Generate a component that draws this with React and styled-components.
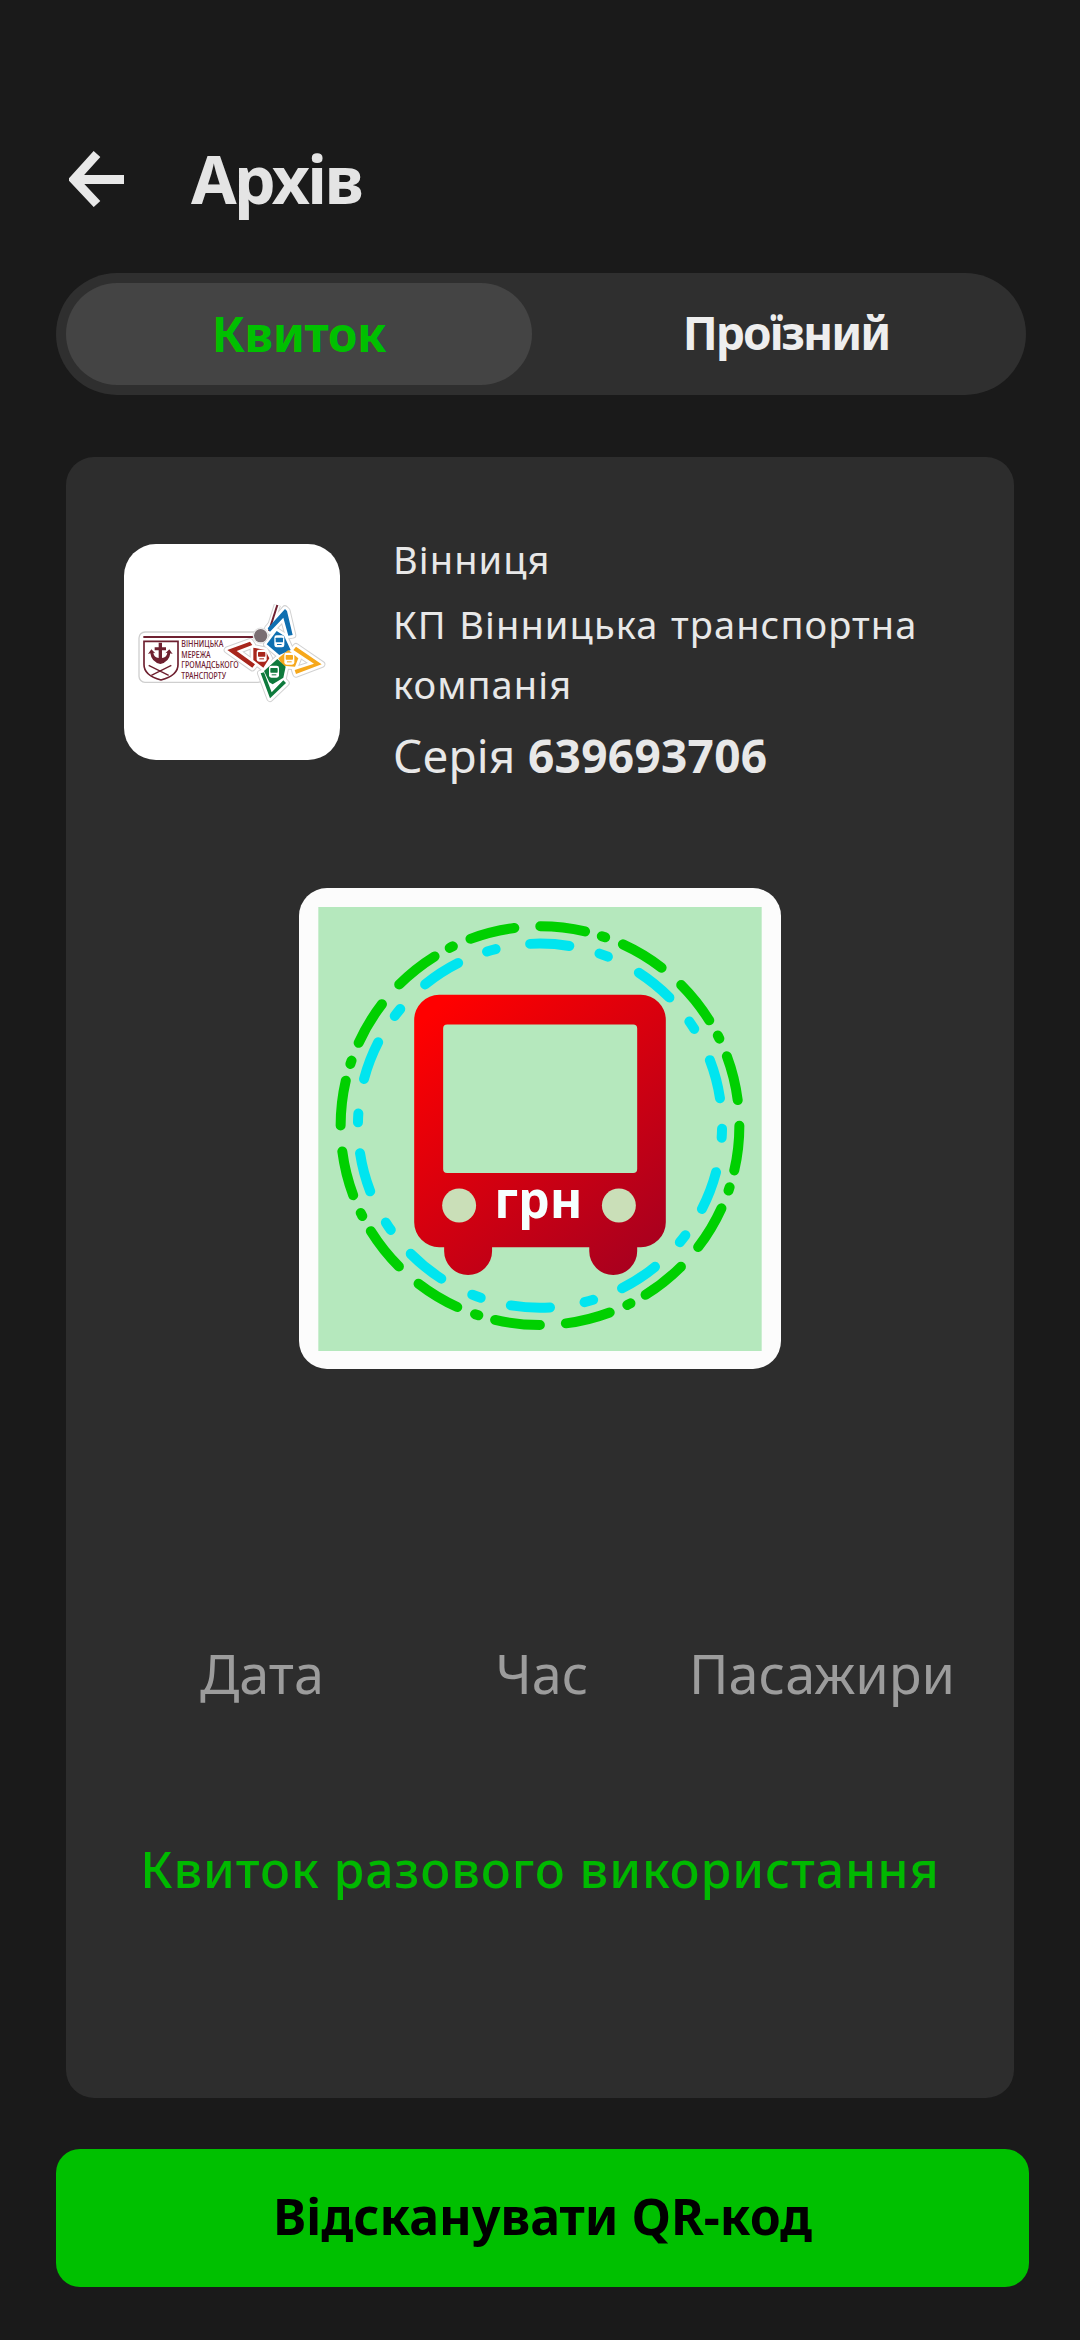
import styled, { createGlobalStyle } from 'styled-components';

const GlobalStyle = createGlobalStyle`
  html, body {
    margin: 0;
    padding: 0;
    background: #1a1a1a;
  }

  * {
    box-sizing: border-box;
  }
`;

const Page = styled.div`
  width: 1080px;
  height: 2340px;
  padding-top: 151px;
  background: #1a1a1a;
  font-family: 'Noto Sans', 'Open Sans', sans-serif;
  overflow: hidden;
`;

const Header = styled.header`
  display: flex;
  align-items: center;
  height: 56px;
  padding-left: 69px;
`;

const BackIcon = styled.svg`
  width: 56px;
  height: 56px;
  margin-right: 66px;
`;

const Title = styled.h1`
  margin: -3px 0 0;
  font-size: 66px;
  line-height: 56px;
  font-weight: 700;
  letter-spacing: -2.8px;
  color: #e4e4e4;
`;

const Tabs = styled.div`
  display: grid;
  grid-template-columns: 466px 1fr;
  width: 970px;
  height: 122px;
  margin: 66px 0 0 56px;
  padding: 10px;
  border-radius: 61px;
  background: #2f2f2f;
`;

const Tab = styled.div`
  display: flex;
  align-items: center;
  justify-content: center;
  border-radius: 51px;
  font-weight: 700;
  font-size: ${(p) => (p.$active ? '48px' : '46px')};
  letter-spacing: ${(p) => (p.$active ? '-0.5px' : '-2px')};
  padding-left: ${(p) => (p.$active ? '0' : '24px')};
  padding-bottom: ${(p) => (p.$active ? '2px' : '4px')};
  color: ${(p) => (p.$active ? '#00c000' : '#eeeeee')};
  background: ${(p) => (p.$active ? '#444444' : 'transparent')};
`;

const Card = styled.section`
  display: flex;
  flex-direction: column;
  width: 948px;
  height: 1641px;
  margin: 62px 0 0 66px;
  padding: 87px 0 0 58px;
  border-radius: 28px;
  background: #2d2d2d;
`;

const CarrierRow = styled.div`
  display: flex;
  gap: 53px;
`;

const LogoTile = styled.div`
  flex: none;
  width: 216px;
  height: 216px;
  border-radius: 32px;
  background: #ffffff;
  overflow: hidden;

  svg {
    display: block;
    width: 100%;
    height: 100%;
  }
`;

const Carrier = styled.div`
  margin-top: -15px;
  width: 560px;
  font-size: 38px;
  line-height: 60px;
  letter-spacing: 1.1px;
  word-spacing: 1.5px;
  color: #e8e8e8;
`;

const CarrierName = styled.div`
  margin-top: 5px;
`;

const Serial = styled.div`
  margin-top: 8px;
  font-size: 46px;
  line-height: 66px;
  letter-spacing: 0.3px;
  word-spacing: 0;

  b {
    font-weight: 700;
  }
`;

const TicketFrame = styled.div`
  align-self: flex-start;
  width: 482px;
  height: 481px;
  margin: 100px 0 0 175px;
  padding: 19px 18px 18px;
  border-radius: 28px;
  background: #fcfcfc;

  svg {
    display: block;
    width: 100%;
    height: 100%;
  }
`;

const Labels = styled.div`
  display: grid;
  grid-template-columns: repeat(3, 280px);
  margin: 267px 0 0 -2px;
`;

const Label = styled.div`
  text-align: center;
  font-size: 54px;
  line-height: 74px;
  font-weight: 400;
  color: #9c9c9c;
`;

const Note = styled.div`
  margin: 126px 0 0 -58px;
  text-align: center;
  font-size: 50px;
  line-height: 66px;
  font-weight: 500;
  letter-spacing: 0.9px;
  color: #00b800;
`;

const ScanButton = styled.button`
  display: block;
  width: 973px;
  height: 138px;
  margin: 51px 0 0 56px;
  padding: 0 0 5px;
  border: none;
  border-radius: 24px;
  background: #00c000;
  color: #000000;
  font-family: inherit;
  font-size: 50px;
  font-weight: 700;
`;

const MAROON = '#6e2030';

// petals of the star, in crop pixels
const PETALS = [
  {
    color: '#0f6fb0',
    body: '140,148 170,108 192,122 212,165 178,180',
    chevron: '143,100 195,42 201,48 218,120 205,122 190,68 150,110',
    bus: [178, 139],
  },
  {
    color: '#a8261c',
    body: '100,158 135,165 148,190 130,218 100,195',
    chevron: '22,165 90,140 97,150 50,168 105,208 97,218',
    bus: [125, 182],
  },
  {
    color: '#f6a81c',
    body: '175,190 205,165 235,190 225,215 188,212',
    chevron: '228,155 305,208 228,237 224,225 282,206 220,165',
    bus: [208, 191],
  },
  {
    color: '#0e7a3c',
    body: '132,228 172,192 197,215 190,248 158,268 148,262',
    chevron: '122,235 132,232 155,292 190,256 198,264 150,310',
    bus: [162, 230],
  },
];

const VinnytsiaLogo = () => (
  <svg viewBox="42 42 648 648">
    <rect x="87" y="306" width="375" height="151" rx="18" fill="#fff" stroke="#cfcfcf" strokeWidth="4" />
    <rect x="100" y="318" width="330" height="6" fill={MAROON} />

    <path d="M102 334H204V404Q204 436 153 450Q102 436 102 404Z" fill="#fff" stroke={MAROON} strokeWidth="5" />
    <path
      fill={MAROON}
      d="M146 338H156V352H168V361H156V384Q170 382 172 368L166 370L178 358L188 372L181 370Q178 396 151 402Q124 396 121 370L114 372L124 358L136 370L130 368Q132 382 146 384V361H134V352H146Z"
    />
    <g fill="none" stroke={MAROON} strokeWidth="4">
      <path d="M116 406L176 436M184 406L124 436" />
    </g>

    <g fill={MAROON} fontFamily="'Noto Sans', sans-serif" fontSize="25" fontWeight="500">
      <text x="214" y="352" textLength="126" lengthAdjust="spacingAndGlyphs">ВІННИЦЬКА</text>
      <text x="214" y="384" textLength="88" lengthAdjust="spacingAndGlyphs">МЕРЕЖА</text>
      <text x="214" y="415" textLength="172" lengthAdjust="spacingAndGlyphs">ГРОМАДСЬКОГО</text>
      <text x="214" y="446" textLength="134" lengthAdjust="spacingAndGlyphs">ТРАНСПОРТУ</text>
    </g>

    <g transform="translate(330 195)" strokeLinejoin="round">
      <g fill="#fff" stroke="#d2d2d2" strokeWidth="22">
        {PETALS.map((p) => (
          <g key={p.color}>
            <polygon points={p.chevron} />
            <polygon points={p.body} />
          </g>
        ))}
        <path d="M145 115L172 30" fill="none" />
      </g>
      <g fill="#fff" stroke="#fff" strokeWidth="16">
        {PETALS.map((p) => (
          <g key={p.color}>
            <polygon points={p.chevron} />
            <polygon points={p.body} />
          </g>
        ))}
        <path d="M145 115L172 30" fill="none" />
      </g>
      <path d="M147 108L172 30" stroke={MAROON} strokeWidth="6" />
      {PETALS.map((p) => (
        <g key={p.color}>
          <polygon points={p.body} fill={p.color} />
          <polygon points={p.chevron} fill={p.color} />
          <rect x={p.bus[0] - 15} y={p.bus[1] - 18} width="30" height="36" rx="7" fill="#fff" />
          <rect x={p.bus[0] - 11} y={p.bus[1] - 11} width="22" height="14" rx="2" fill={p.color} />
          <rect x={p.bus[0] - 7} y={p.bus[1] + 8} width="14" height="3" fill={p.color} />
        </g>
      ))}
      <circle cx="122" cy="122" r="23" fill="#fff" stroke="#d2d2d2" strokeWidth="2" />
      <circle cx="122" cy="122" r="20" fill="#7a6e72" />
    </g>
  </svg>
);

const TicketPicture = () => (
  <svg viewBox="84 81 1332 1334">
    <defs>
      <linearGradient id="busFill" gradientUnits="userSpaceOnUse" x1="420" y1="400" x2="1080" y2="1180">
        <stop offset="0" stopColor="#ff0000" />
        <stop offset="1" stopColor="#a50020" />
      </linearGradient>
    </defs>
    <rect x="84" y="81" width="1332" height="1334" fill="#b5e8bd" />

    <circle
      cx="750"
      cy="738"
      r="599"
      fill="none"
      stroke="#00d000"
      strokeWidth="30"
      strokeLinecap="round"
      pathLength="360"
      strokeDasharray="13 5 1 5.5 13 7.5"
    />
    <circle
      cx="750"
      cy="738"
      r="547"
      fill="none"
      stroke="#00e5ef"
      strokeWidth="30"
      strokeLinecap="round"
      pathLength="360"
      strokeDasharray="12.4 9.8 2.8 11"
      strokeDashoffset="21.2"
    />

    <path
      fill="url(#busFill)"
      fillRule="evenodd"
      d="M447 345H1053A75 75 0 0 1 1128 420V1028A75 75 0 0 1 1053 1103H1042V1115A72 72 0 0 1 898 1115V1103H606V1115A72 72 0 0 1 462 1115V1103H447A75 75 0 0 1 372 1028V420A75 75 0 0 1 447 345Z
         M471 434A12 12 0 0 0 459 446V868A12 12 0 0 0 471 880H1030A12 12 0 0 0 1042 868V446A12 12 0 0 0 1030 434Z"
    />
    <circle cx="507" cy="978" r="51" fill="#cadfb8" />
    <circle cx="987" cy="978" r="51" fill="#cadfb8" />
    <text
      x="745"
      y="1015"
      textAnchor="middle"
      fill="#f6ffff"
      fontFamily="'Noto Sans', sans-serif"
      fontWeight="700"
      fontSize="150"
    >
      грн
    </text>
  </svg>
);

const App = () => (
  <>
    <GlobalStyle />
    <Page>
      <Header>
        <BackIcon viewBox="0 0 56 56" fill="none" stroke="#e8e8e8" strokeWidth="9">
          <path d="M55 28.5H7M28 3L5 28.5L28 53" />
        </BackIcon>
        <Title>Архів</Title>
      </Header>

      <Tabs>
        <Tab $active>Квиток</Tab>
        <Tab>Проїзний</Tab>
      </Tabs>

      <Card>
        <CarrierRow>
          <LogoTile>
            <VinnytsiaLogo />
          </LogoTile>
          <Carrier>
            <div>Вінниця</div>
            <CarrierName>КП Вінницька транспортна компанія</CarrierName>
            <Serial>
              Серія <b>639693706</b>
            </Serial>
          </Carrier>
        </CarrierRow>

        <TicketFrame>
          <TicketPicture />
        </TicketFrame>

        <Labels>
          <Label>Дата</Label>
          <Label>Час</Label>
          <Label>Пасажири</Label>
        </Labels>

        <Note>Квиток разового використання</Note>
      </Card>

      <ScanButton>Відсканувати QR-код</ScanButton>
    </Page>
  </>
);

export default App;
